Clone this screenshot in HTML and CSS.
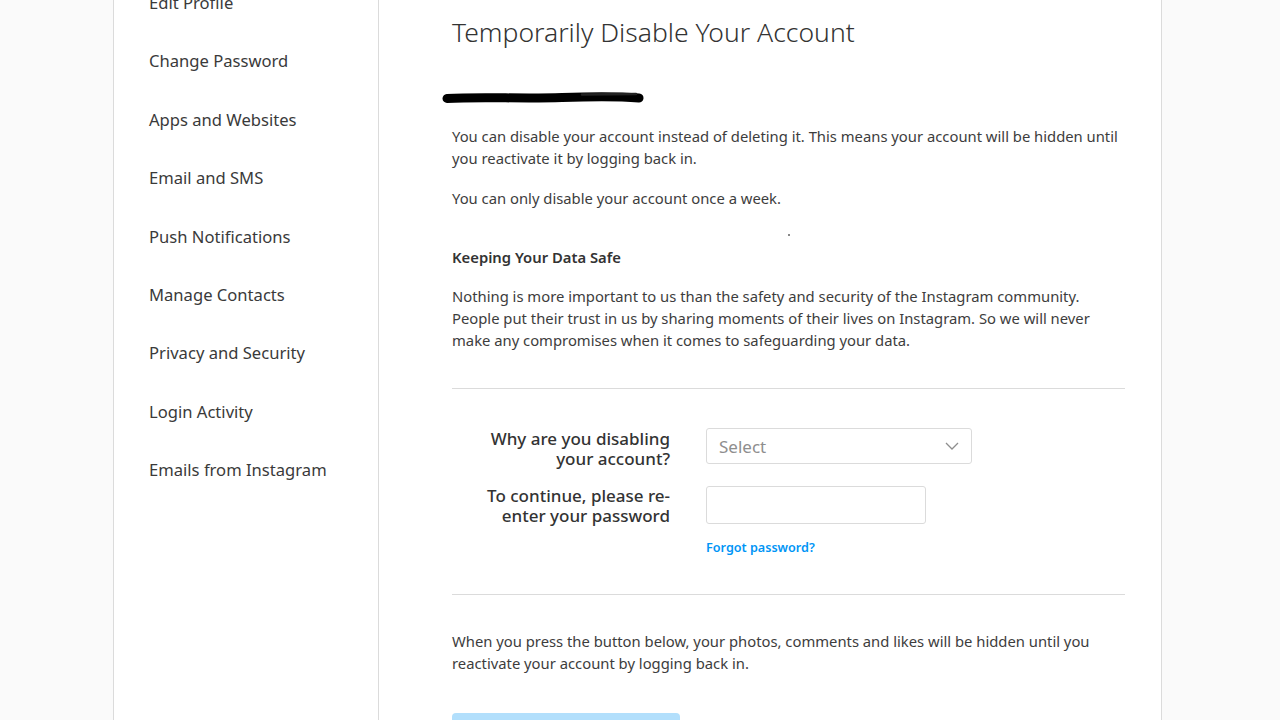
FILE: index.html
```html
<!DOCTYPE html>
<html lang="en">

<head>
	<meta charset="UTF-8">
	<meta name="viewport" content="width=device-width, initial-scale=1.0">
	<title>Temporarily Disable Your Account</title>
	<link rel="stylesheet" href="styles.css">
</head>

<body>
	<div class="panel">
		<ul class="sideNav">
			<li>Edit Profile</li>
			<li>Change Password</li>
			<li>Apps and Websites</li>
			<li>Email and SMS</li>
			<li>Push Notifications</li>
			<li>Manage Contacts</li>
			<li>Privacy and Security</li>
			<li>Login Activity</li>
			<li>Emails from Instagram</li>
		</ul>
		<main class="content">
			<h2>Temporarily Disable Your Account</h2>
			<div class="scribble">
				<svg width="204" height="16" viewBox="0 0 204 16">
					<path d="M5 8.5 C40 6.5, 80 9, 120 7.5 S180 6.5, 197 8" stroke="#000" stroke-width="9"
						stroke-linecap="round" fill="none" />
					<path d="M140 4.5 L194 4" stroke="#222" stroke-width="2.5" stroke-linecap="round" fill="none" />
				</svg>
			</div>
			<p>You can disable your account instead of deleting it. This means your account will be hidden until
				you reactivate it by logging back in.</p>
			<p>You can only disable your account once a week.</p>
			<span class="speck"></span>
			<h3>Keeping Your Data Safe</h3>
			<p>Nothing is more important to us than the safety and security of the Instagram community.
				People put their trust in us by sharing moments of their lives on Instagram. So we will never
				make any compromises when it comes to safeguarding your data.</p>
			<hr>
			<form class="disableForm">
				<div class="row">
					<label for="reason">Why are you disabling your account?</label>
					<div class="selectBox" id="reason">
						<span>Select</span>
						<svg width="14" height="8" viewBox="0 0 14 8">
							<path d="M1 1 L7 7 L13 1" stroke="#8e8e8e" stroke-width="1.3" fill="none" />
						</svg>
					</div>
				</div>
				<div class="row">
					<label for="pw">To continue, please re-enter your password</label>
					<div class="field">
						<input type="password" id="pw">
						<a href="#" class="forgot">Forgot password?</a>
					</div>
				</div>
			</form>
			<hr class="second">
			<p class="final">When you press the button below, your photos, comments and likes will be hidden until you
				reactivate your account by logging back in.</p>
			<button class="disableButton" type="button" disabled>Temporarily Disable Account</button>
		</main>
	</div>
</body>

</html>
```

FILE: styles.css
```css
body {
	margin: 0;
	background-color: #fafafa;
	font-family: "Noto Sans", "Open Sans", sans-serif;
	color: #383838;
	overflow: hidden;
	height: 720px;
}

.panel {
	display: flex;
	width: 1047px;
	margin: -26px 0 0 113px;
	min-height: 900px;
	background-color: #fff;
	border: 1px solid #dbdbdb;
	border-top: none;
}

.sideNav {
	list-style: none;
	margin: 0;
	padding: 0;
	width: 264px;
	border-right: 1px solid #dbdbdb;
	flex-shrink: 0;
}

.sideNav li {
	padding: 17px 0 17px 35px;
	line-height: 24.4px;
	font-size: 16.6px;
	color: #3a3a3a;
}

.content {
	padding: 0 36px 0 73px;
	flex: 1;
	position: relative;
}

h2 {
	font-size: 26.5px;
	font-weight: 300;
	margin: 41px 0 0;
	line-height: 34px;
	color: #333;
}

.scribble {
	margin: 40px 0 0 -10px;
	height: 16px;
}

p {
	font-size: 14.8px;
	line-height: 22px;
	margin: 20px 0 0;
	color: #3d3d3d;
}

p + p {
	margin-top: 18px;
}

.speck {
	position: absolute;
	left: 409px;
	top: 260px;
	width: 2px;
	height: 2px;
	background: #888;
}

h3 {
	font-size: 14.8px;
	font-weight: 600;
	margin: 37px 0 0;
	line-height: 22px;
	color: #333;
}

h3 + p {
	margin-top: 17px;
}

hr {
	border: none;
	border-top: 1px solid #dbdbdb;
	margin: 37px 0 0;
}

.disableForm {
	display: flex;
	flex-direction: column;
	gap: 17px;
	padding: 40px 0 0;
}

.row {
	display: flex;
	align-items: flex-start;
	gap: 36px;
}

.row label {
	width: 218px;
	text-align: right;
	font-size: 17px;
	font-weight: 500;
	line-height: 20px;
	flex-shrink: 0;
	color: #333;
}

.selectBox {
	display: flex;
	align-items: center;
	justify-content: space-between;
	box-sizing: border-box;
	width: 266px;
	height: 36px;
	padding: 0 12px;
	margin-top: -1px;
	border: 1px solid #dbdbdb;
	border-radius: 3px;
	font-size: 17px;
	color: #8e8e8e;
}

.field {
	display: flex;
	flex-direction: column;
}

input {
	width: 220px;
	height: 38px;
	box-sizing: border-box;
	border: 1px solid #dbdbdb;
	border-radius: 3px;
	background: #fff;
	font-size: 14px;
}

.forgot {
	color: #0095f6;
	font-size: 12.6px;
	font-weight: 600;
	text-decoration: none;
	margin-top: 16px;
	line-height: 16px;
}

hr.second {
	margin-top: 38px;
}

.final {
	margin-top: 35px;
}

.disableButton {
	margin-top: 39px;
	width: 228px;
	height: 32px;
	border: none;
	border-radius: 4px;
	background-color: #b2dffc;
	color: #fff;
	font-family: inherit;
	font-size: 14px;
	font-weight: 600;
}
```
